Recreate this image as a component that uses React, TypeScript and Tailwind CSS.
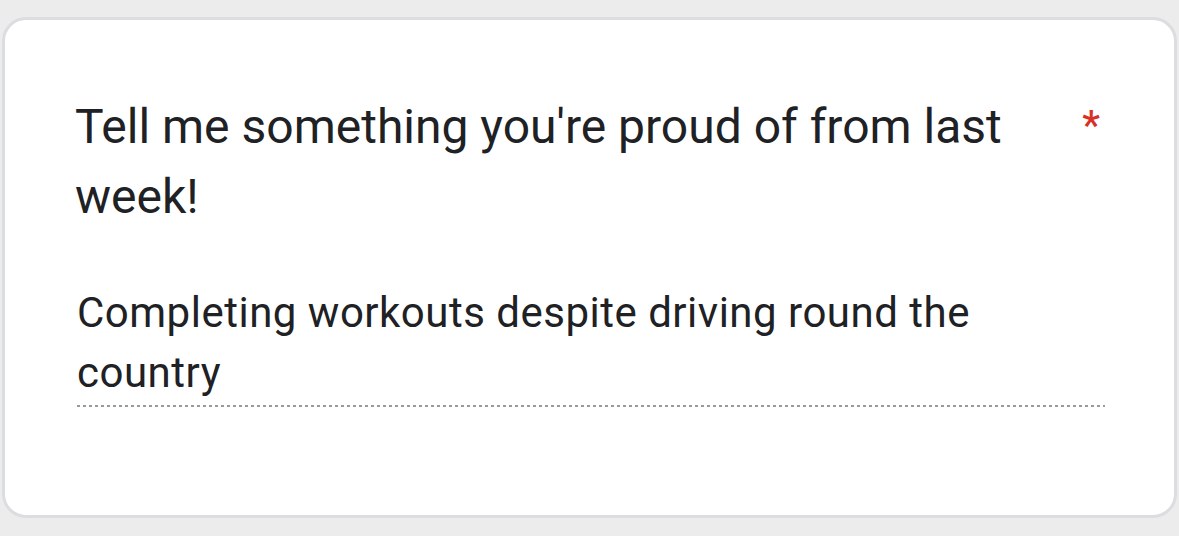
export default function App() {
  return (
    <div className="min-h-screen w-full bg-[#ececec] pt-[17px] pl-[2px] pr-[2px] pb-[18px]" style={{ fontFamily: 'Roboto, "Noto Sans", sans-serif' }}>
      <div className="h-[501px] rounded-[24px] border-[3px] border-[#dcdde0] bg-white pl-[70px] pr-[72px] pt-[72px]">
        {/* Question */}
        <div className="flex items-start justify-between">
          <h2 className="max-w-[960px] text-[48px] leading-[70px] font-normal text-[#202124]">
            Tell me something you're proud of from last week!
          </h2>
          <span className="mt-[14px] mr-[2px] text-[40px] leading-[40px] font-medium text-[#d93025]">*</span>
        </div>

        {/* Answer */}
        <div className="mt-[51px] ml-[2px] w-[1028px]">
          <p className="max-w-[960px] text-[42px] leading-[60px] tracking-[0.5px] text-[#202124]">
            Completing workouts despite driving round the country
          </p>
          <div className="mt-[2px] h-[2px] bg-[repeating-linear-gradient(to_right,#9a9a9a_0_3px,transparent_3px_6px)]" />
        </div>
      </div>
    </div>
  )
}
